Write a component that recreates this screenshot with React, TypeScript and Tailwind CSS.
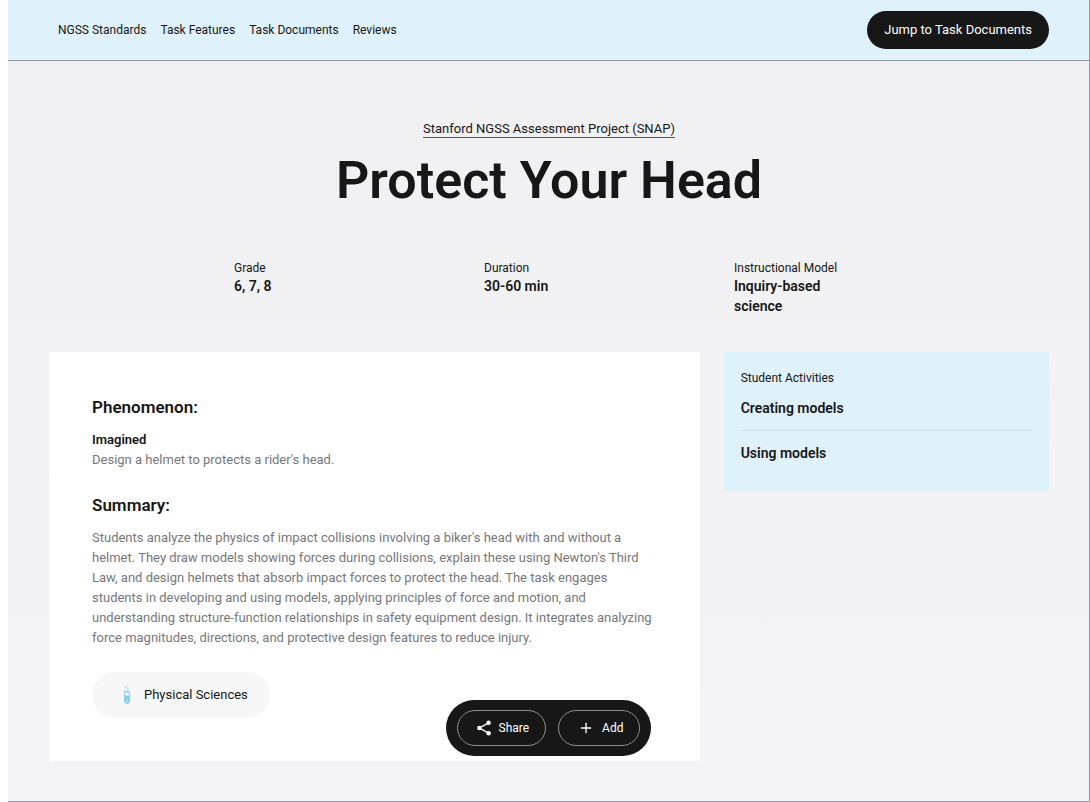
import { Plus } from "lucide-react";

const navLinks = [
  { label: "NGSS Standards", href: "#standards" },
  { label: "Task Features", href: "#features" },
  { label: "Task Documents", href: "#documents" },
  { label: "Reviews", href: "#reviews" },
];

const facts = [
  { label: "Grade", value: "6, 7, 8" },
  { label: "Duration", value: "30-60 min" },
  { label: "Instructional Model", value: "Inquiry-based science" },
];

const activities = ["Creating models", "Using models"];

function ShareIcon() {
  return (
    <svg className="h-4 w-3.5" viewBox="0 0 14 16" fill="none" stroke="currentColor" aria-hidden="true">
      <path d="M11.6 2.8 2.4 8l9.2 5.2" strokeWidth="1.4" />
      <g fill="currentColor" stroke="none">
        <circle cx="11.6" cy="2.8" r="2.2" />
        <circle cx="2.4" cy="8" r="2.2" />
        <circle cx="11.6" cy="13.2" r="2.2" />
      </g>
    </svg>
  );
}

function TestTubeIcon() {
  return (
    <svg className="h-[18px] w-2" viewBox="0 0 8 18" fill="none" stroke="#85d0ee" aria-hidden="true">
      <circle cx="3.4" cy="1.3" r="0.7" strokeWidth="0.6" />
      <circle cx="5" cy="3.3" r="0.6" strokeWidth="0.6" />
      <circle cx="3" cy="4" r="0.4" strokeWidth="0.5" />
      <path d="M1 5.8h6" strokeWidth="1.3" />
      <path d="M1.7 6v9.2a2.3 2.3 0 0 0 4.6 0V6" strokeWidth="1" />
      <path d="M1.7 9.4h4.6v5.8a2.3 2.3 0 0 1-4.6 0z" fill="#85d0ee" stroke="none" />
      <circle cx="4" cy="15.2" r="0.7" fill="#f7f7f7" stroke="none" />
    </svg>
  );
}

function Header() {
  return (
    <header className="flex items-center justify-between border-b border-[#8999a4] bg-[#dff1fb] pt-[11px] pr-10 pb-[11px] pl-[50px]">
      <nav className="flex gap-3.5 text-[12px] leading-4">
        {navLinks.map((link) => (
          <a key={link.href} href={link.href}>
            {link.label}
          </a>
        ))}
      </nav>
      <a
        href="#documents"
        className="rounded-full bg-[#171717] px-[17px] py-[9px] text-[13px] leading-5 text-white"
      >
        Jump to Task Documents
      </a>
    </header>
  );
}

function ActionBar() {
  return (
    <div className="absolute bottom-[45px] left-1/2 flex -translate-x-1/2 gap-3 rounded-full bg-[#171717] px-[11px] py-[10px] text-[12px] leading-4 text-white">
      <button
        type="button"
        className="flex h-9 items-center gap-2 rounded-full border border-[#8f8f8f] pr-4 pl-[19px]"
      >
        <ShareIcon />
        Share
      </button>
      <button
        type="button"
        className="flex h-9 items-center gap-2 rounded-full border border-[#8f8f8f] pr-4 pl-[19px]"
      >
        <Plus size={16} strokeWidth={2} />
        Add
      </button>
    </div>
  );
}

export default function App() {
  return (
    <div className="bg-white pl-2 font-[Roboto,sans-serif] text-[#171717]">
      <div className="relative flex min-h-screen flex-col border-r border-b border-[#97979b] bg-linear-to-b from-[#f0f0f2] to-[#f4f4f6]">
        <Header />

        <main className="pr-10 pb-10 pl-[41px]">
          <div className="mt-[55px] text-center">
            <a href="#snap" className="inline-block border-b border-[#555] text-[13px] leading-4">
              Stanford NGSS Assessment Project (SNAP)
            </a>
            <h1 className="mt-[11px] text-[52px] leading-[60px] font-semibold">Protect Your Head</h1>
          </div>

          <dl className="mx-auto mt-[49px] grid w-3/4 grid-cols-3">
            {facts.map((fact) => (
              <div key={fact.label} className="px-[60px]">
                <dt className="text-[12px] leading-4 whitespace-nowrap">{fact.label}</dt>
                <dd className="text-[14px] leading-5 font-semibold">{fact.value}</dd>
              </div>
            ))}
          </dl>

          <div className="mt-9 grid grid-cols-[2fr_1fr] items-start gap-6">
            <section className="bg-white px-[43px] py-[43px]">
              <h2 className="text-[17px] leading-6 font-semibold">Phenomenon:</h2>
              <h3 className="mt-[11px] text-[13px] leading-5 font-semibold">Imagined</h3>
              <p className="text-[13px] leading-5 text-[#77777b]">Design a helmet to protects a rider's head.</p>

              <h2 className="mt-[23px] text-[17px] leading-6 font-semibold">Summary:</h2>
              <p className="mt-[11px] text-[13px] leading-5 text-[#77777b]">
                Students analyze the physics of impact collisions involving a biker's head with and without a
                helmet. They draw models showing forces during collisions, explain these using Newton's Third
                Law, and design helmets that absorb impact forces to protect the head. The task engages
                students in developing and using models, applying principles of force and motion, and
                understanding structure-function relationships in safety equipment design. It integrates
                analyzing force magnitudes, directions, and protective design features to reduce injury.
              </p>

              <div className="mt-6 inline-flex h-[46px] items-center gap-[13px] rounded-full bg-[#f7f7f7] pr-[22px] pl-[31px] text-[13px] leading-5">
                <TestTubeIcon />
                Physical Sciences
              </div>
            </section>

            <aside className="bg-[#dff1fb] px-[17px] pt-[18px] pb-7">
              <h2 className="text-[12px] leading-4">Student Activities</h2>
              <ul className="mt-3 divide-y divide-[#d3e5ef] text-[14px] leading-5 font-semibold">
                {activities.map((activity) => (
                  <li key={activity} className="py-3 first:pt-0 last:pb-0">
                    {activity}
                  </li>
                ))}
              </ul>
            </aside>
          </div>
        </main>

        <ActionBar />
      </div>
    </div>
  );
}
